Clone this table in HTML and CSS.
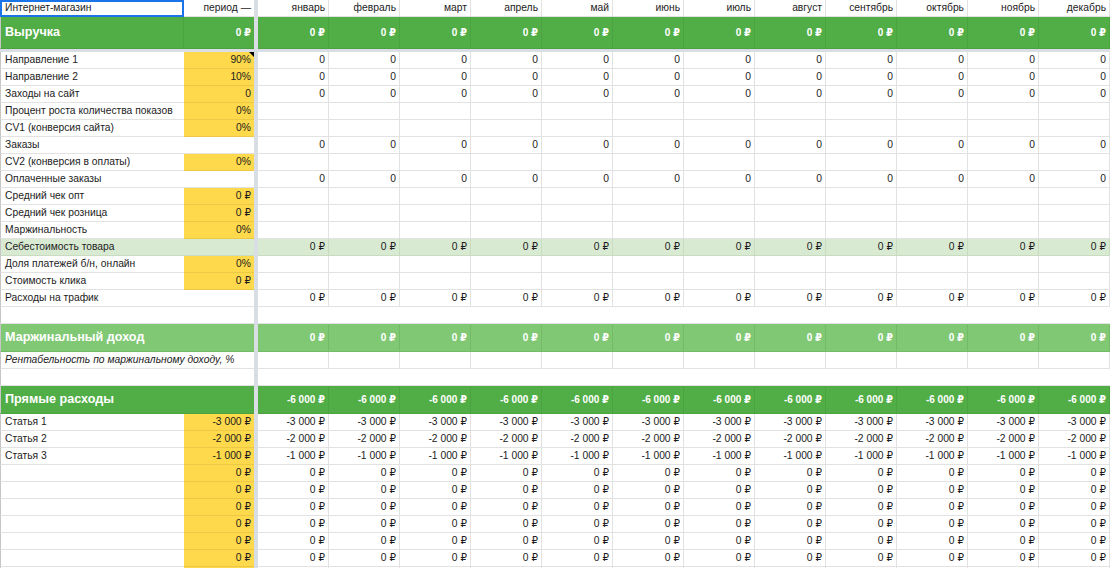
FILE: index.html
```html
<!DOCTYPE html>
<html lang="ru">
<head>
<meta charset="utf-8">
<title>Интернет-магазин</title>
<link rel="stylesheet" href="styles.css">
</head>
<body>
<div class="sheet">
  <div class="row head">
    <div class="a sel">Интернет-магазин</div><div class="b">период —</div><div class="fz"></div>
    <div class="m">январь</div><div class="m">февраль</div><div class="m">март</div><div class="m">апрель</div><div class="m">май</div><div class="m">июнь</div><div class="m">июль</div><div class="m">август</div><div class="m">сентябрь</div><div class="m">октябрь</div><div class="m">ноябрь</div><div class="m">декабрь</div>
  </div>
  <div class="row band tall">
    <div class="a split">Выручка</div><div class="b">0 ₽</div><div class="fz"></div>
    <div class="m">0 ₽</div><div class="m">0 ₽</div><div class="m">0 ₽</div><div class="m">0 ₽</div><div class="m">0 ₽</div><div class="m">0 ₽</div><div class="m">0 ₽</div><div class="m">0 ₽</div><div class="m">0 ₽</div><div class="m">0 ₽</div><div class="m">0 ₽</div><div class="m">0 ₽</div>
  </div>
  <div class="hfz"></div>
  <div class="row">
    <div class="a">Направление 1</div><div class="b y note">90%</div><div class="fz"></div>
    <div class="m">0</div><div class="m">0</div><div class="m">0</div><div class="m">0</div><div class="m">0</div><div class="m">0</div><div class="m">0</div><div class="m">0</div><div class="m">0</div><div class="m">0</div><div class="m">0</div><div class="m">0</div>
  </div>
  <div class="row">
    <div class="a">Направление 2</div><div class="b y">10%</div><div class="fz"></div>
    <div class="m">0</div><div class="m">0</div><div class="m">0</div><div class="m">0</div><div class="m">0</div><div class="m">0</div><div class="m">0</div><div class="m">0</div><div class="m">0</div><div class="m">0</div><div class="m">0</div><div class="m">0</div>
  </div>
  <div class="row">
    <div class="a">Заходы на сайт</div><div class="b y">0</div><div class="fz"></div>
    <div class="m">0</div><div class="m">0</div><div class="m">0</div><div class="m">0</div><div class="m">0</div><div class="m">0</div><div class="m">0</div><div class="m">0</div><div class="m">0</div><div class="m">0</div><div class="m">0</div><div class="m">0</div>
  </div>
  <div class="row">
    <div class="a">Процент роста количества показов</div><div class="b y">0%</div><div class="fz"></div>
    <div class="m"></div><div class="m"></div><div class="m"></div><div class="m"></div><div class="m"></div><div class="m"></div><div class="m"></div><div class="m"></div><div class="m"></div><div class="m"></div><div class="m"></div><div class="m"></div>
  </div>
  <div class="row">
    <div class="a">CV1 (конверсия сайта)</div><div class="b y">0%</div><div class="fz"></div>
    <div class="m"></div><div class="m"></div><div class="m"></div><div class="m"></div><div class="m"></div><div class="m"></div><div class="m"></div><div class="m"></div><div class="m"></div><div class="m"></div><div class="m"></div><div class="m"></div>
  </div>
  <div class="row">
    <div class="a">Заказы</div><div class="b"></div><div class="fz"></div>
    <div class="m">0</div><div class="m">0</div><div class="m">0</div><div class="m">0</div><div class="m">0</div><div class="m">0</div><div class="m">0</div><div class="m">0</div><div class="m">0</div><div class="m">0</div><div class="m">0</div><div class="m">0</div>
  </div>
  <div class="row">
    <div class="a">CV2 (конверсия в оплаты)</div><div class="b y">0%</div><div class="fz"></div>
    <div class="m"></div><div class="m"></div><div class="m"></div><div class="m"></div><div class="m"></div><div class="m"></div><div class="m"></div><div class="m"></div><div class="m"></div><div class="m"></div><div class="m"></div><div class="m"></div>
  </div>
  <div class="row">
    <div class="a">Оплаченные заказы</div><div class="b"></div><div class="fz"></div>
    <div class="m">0</div><div class="m">0</div><div class="m">0</div><div class="m">0</div><div class="m">0</div><div class="m">0</div><div class="m">0</div><div class="m">0</div><div class="m">0</div><div class="m">0</div><div class="m">0</div><div class="m">0</div>
  </div>
  <div class="row">
    <div class="a">Средний чек опт</div><div class="b y">0 ₽</div><div class="fz"></div>
    <div class="m"></div><div class="m"></div><div class="m"></div><div class="m"></div><div class="m"></div><div class="m"></div><div class="m"></div><div class="m"></div><div class="m"></div><div class="m"></div><div class="m"></div><div class="m"></div>
  </div>
  <div class="row">
    <div class="a">Средний чек розница</div><div class="b y">0 ₽</div><div class="fz"></div>
    <div class="m"></div><div class="m"></div><div class="m"></div><div class="m"></div><div class="m"></div><div class="m"></div><div class="m"></div><div class="m"></div><div class="m"></div><div class="m"></div><div class="m"></div><div class="m"></div>
  </div>
  <div class="row">
    <div class="a">Маржинальность</div><div class="b y">0%</div><div class="fz"></div>
    <div class="m"></div><div class="m"></div><div class="m"></div><div class="m"></div><div class="m"></div><div class="m"></div><div class="m"></div><div class="m"></div><div class="m"></div><div class="m"></div><div class="m"></div><div class="m"></div>
  </div>
  <div class="row cost">
    <div class="a">Себестоимость товара</div><div class="b"></div><div class="fz"></div>
    <div class="m">0 ₽</div><div class="m">0 ₽</div><div class="m">0 ₽</div><div class="m">0 ₽</div><div class="m">0 ₽</div><div class="m">0 ₽</div><div class="m">0 ₽</div><div class="m">0 ₽</div><div class="m">0 ₽</div><div class="m">0 ₽</div><div class="m">0 ₽</div><div class="m">0 ₽</div>
  </div>
  <div class="row">
    <div class="a">Доля платежей б/н, онлайн</div><div class="b y">0%</div><div class="fz"></div>
    <div class="m"></div><div class="m"></div><div class="m"></div><div class="m"></div><div class="m"></div><div class="m"></div><div class="m"></div><div class="m"></div><div class="m"></div><div class="m"></div><div class="m"></div><div class="m"></div>
  </div>
  <div class="row">
    <div class="a">Стоимость клика</div><div class="b y">0 ₽</div><div class="fz"></div>
    <div class="m"></div><div class="m"></div><div class="m"></div><div class="m"></div><div class="m"></div><div class="m"></div><div class="m"></div><div class="m"></div><div class="m"></div><div class="m"></div><div class="m"></div><div class="m"></div>
  </div>
  <div class="row">
    <div class="a">Расходы на трафик</div><div class="b"></div><div class="fz"></div>
    <div class="m">0 ₽</div><div class="m">0 ₽</div><div class="m">0 ₽</div><div class="m">0 ₽</div><div class="m">0 ₽</div><div class="m">0 ₽</div><div class="m">0 ₽</div><div class="m">0 ₽</div><div class="m">0 ₽</div><div class="m">0 ₽</div><div class="m">0 ₽</div><div class="m">0 ₽</div>
  </div>
  <div class="row blank">
    <div class="a"></div><div class="b"></div><div class="fz"></div>
    <div class="m"></div><div class="m"></div><div class="m"></div><div class="m"></div><div class="m"></div><div class="m"></div><div class="m"></div><div class="m"></div><div class="m"></div><div class="m"></div><div class="m"></div><div class="m"></div>
  </div>
  <div class="row band light mid">
    <div class="a">Маржинальный доход</div><div class="b"></div><div class="fz"></div>
    <div class="m">0 ₽</div><div class="m">0 ₽</div><div class="m">0 ₽</div><div class="m">0 ₽</div><div class="m">0 ₽</div><div class="m">0 ₽</div><div class="m">0 ₽</div><div class="m">0 ₽</div><div class="m">0 ₽</div><div class="m">0 ₽</div><div class="m">0 ₽</div><div class="m">0 ₽</div>
  </div>
  <div class="row it">
    <div class="a">Рентабельность по маржинальному доходу, %</div><div class="b"></div><div class="fz"></div>
    <div class="m"></div><div class="m"></div><div class="m"></div><div class="m"></div><div class="m"></div><div class="m"></div><div class="m"></div><div class="m"></div><div class="m"></div><div class="m"></div><div class="m"></div><div class="m"></div>
  </div>
  <div class="row blank">
    <div class="a"></div><div class="b"></div><div class="fz"></div>
    <div class="m"></div><div class="m"></div><div class="m"></div><div class="m"></div><div class="m"></div><div class="m"></div><div class="m"></div><div class="m"></div><div class="m"></div><div class="m"></div><div class="m"></div><div class="m"></div>
  </div>
  <div class="row band mid">
    <div class="a">Прямые расходы</div><div class="b"></div><div class="fz"></div>
    <div class="m">-6 000 ₽</div><div class="m">-6 000 ₽</div><div class="m">-6 000 ₽</div><div class="m">-6 000 ₽</div><div class="m">-6 000 ₽</div><div class="m">-6 000 ₽</div><div class="m">-6 000 ₽</div><div class="m">-6 000 ₽</div><div class="m">-6 000 ₽</div><div class="m">-6 000 ₽</div><div class="m">-6 000 ₽</div><div class="m">-6 000 ₽</div>
  </div>
  <div class="row">
    <div class="a">Статья 1</div><div class="b y">-3 000 ₽</div><div class="fz"></div>
    <div class="m">-3 000 ₽</div><div class="m">-3 000 ₽</div><div class="m">-3 000 ₽</div><div class="m">-3 000 ₽</div><div class="m">-3 000 ₽</div><div class="m">-3 000 ₽</div><div class="m">-3 000 ₽</div><div class="m">-3 000 ₽</div><div class="m">-3 000 ₽</div><div class="m">-3 000 ₽</div><div class="m">-3 000 ₽</div><div class="m">-3 000 ₽</div>
  </div>
  <div class="row">
    <div class="a">Статья 2</div><div class="b y">-2 000 ₽</div><div class="fz"></div>
    <div class="m">-2 000 ₽</div><div class="m">-2 000 ₽</div><div class="m">-2 000 ₽</div><div class="m">-2 000 ₽</div><div class="m">-2 000 ₽</div><div class="m">-2 000 ₽</div><div class="m">-2 000 ₽</div><div class="m">-2 000 ₽</div><div class="m">-2 000 ₽</div><div class="m">-2 000 ₽</div><div class="m">-2 000 ₽</div><div class="m">-2 000 ₽</div>
  </div>
  <div class="row">
    <div class="a">Статья 3</div><div class="b y">-1 000 ₽</div><div class="fz"></div>
    <div class="m">-1 000 ₽</div><div class="m">-1 000 ₽</div><div class="m">-1 000 ₽</div><div class="m">-1 000 ₽</div><div class="m">-1 000 ₽</div><div class="m">-1 000 ₽</div><div class="m">-1 000 ₽</div><div class="m">-1 000 ₽</div><div class="m">-1 000 ₽</div><div class="m">-1 000 ₽</div><div class="m">-1 000 ₽</div><div class="m">-1 000 ₽</div>
  </div>
  <div class="row">
    <div class="a"></div><div class="b y">0 ₽</div><div class="fz"></div>
    <div class="m">0 ₽</div><div class="m">0 ₽</div><div class="m">0 ₽</div><div class="m">0 ₽</div><div class="m">0 ₽</div><div class="m">0 ₽</div><div class="m">0 ₽</div><div class="m">0 ₽</div><div class="m">0 ₽</div><div class="m">0 ₽</div><div class="m">0 ₽</div><div class="m">0 ₽</div>
  </div>
  <div class="row">
    <div class="a"></div><div class="b y">0 ₽</div><div class="fz"></div>
    <div class="m">0 ₽</div><div class="m">0 ₽</div><div class="m">0 ₽</div><div class="m">0 ₽</div><div class="m">0 ₽</div><div class="m">0 ₽</div><div class="m">0 ₽</div><div class="m">0 ₽</div><div class="m">0 ₽</div><div class="m">0 ₽</div><div class="m">0 ₽</div><div class="m">0 ₽</div>
  </div>
  <div class="row">
    <div class="a"></div><div class="b y">0 ₽</div><div class="fz"></div>
    <div class="m">0 ₽</div><div class="m">0 ₽</div><div class="m">0 ₽</div><div class="m">0 ₽</div><div class="m">0 ₽</div><div class="m">0 ₽</div><div class="m">0 ₽</div><div class="m">0 ₽</div><div class="m">0 ₽</div><div class="m">0 ₽</div><div class="m">0 ₽</div><div class="m">0 ₽</div>
  </div>
  <div class="row">
    <div class="a"></div><div class="b y">0 ₽</div><div class="fz"></div>
    <div class="m">0 ₽</div><div class="m">0 ₽</div><div class="m">0 ₽</div><div class="m">0 ₽</div><div class="m">0 ₽</div><div class="m">0 ₽</div><div class="m">0 ₽</div><div class="m">0 ₽</div><div class="m">0 ₽</div><div class="m">0 ₽</div><div class="m">0 ₽</div><div class="m">0 ₽</div>
  </div>
  <div class="row">
    <div class="a"></div><div class="b y">0 ₽</div><div class="fz"></div>
    <div class="m">0 ₽</div><div class="m">0 ₽</div><div class="m">0 ₽</div><div class="m">0 ₽</div><div class="m">0 ₽</div><div class="m">0 ₽</div><div class="m">0 ₽</div><div class="m">0 ₽</div><div class="m">0 ₽</div><div class="m">0 ₽</div><div class="m">0 ₽</div><div class="m">0 ₽</div>
  </div>
  <div class="row">
    <div class="a"></div><div class="b y">0 ₽</div><div class="fz"></div>
    <div class="m">0 ₽</div><div class="m">0 ₽</div><div class="m">0 ₽</div><div class="m">0 ₽</div><div class="m">0 ₽</div><div class="m">0 ₽</div><div class="m">0 ₽</div><div class="m">0 ₽</div><div class="m">0 ₽</div><div class="m">0 ₽</div><div class="m">0 ₽</div><div class="m">0 ₽</div>
  </div>
  <div class="row">
    <div class="a"></div><div class="b y"></div><div class="fz"></div>
    <div class="m"></div><div class="m"></div><div class="m"></div><div class="m"></div><div class="m"></div><div class="m"></div><div class="m"></div><div class="m"></div><div class="m"></div><div class="m"></div><div class="m"></div><div class="m"></div>
  </div>
</div>
</body>
</html>
```

FILE: styles.css
```css
* { box-sizing: border-box; }
html, body { margin: 0; padding: 0; background: #fff; }
body {
  width: 1113px;
  height: 568px;
  overflow: hidden;
  font-family: "Liberation Sans", Arial, "DejaVu Sans", sans-serif;
  font-size: 10.3px;
  color: #1c1c1c;
}
.sheet { width: 1110px; }
.row {
  display: grid;
  grid-template-columns: 184px 70px 4px repeat(12, 71px);
  height: 17px;
}
.row > div {
  border-bottom: 1px solid #e2e2e2;
  line-height: 16px;
  white-space: nowrap;
}
.row > .a { border-left: 1px solid #c6c6c6; padding-left: 4px; }
.row > .b { text-align: right; padding-right: 3px; }
.row > .fz { background: #d9dee5; border-bottom: 0; }
.row > .m { text-align: right; padding-right: 3px; border-right: 1px solid #e2e2e2; }
.row > .y {
  background: #fdd94b;
  border-bottom-color: #ecc845;
}
.note { position: relative; }
.note::after {
  content: "";
  position: absolute;
  top: 0;
  right: 0;
  border-top: 5px solid #000;
  border-left: 5px solid transparent;
}
.sel { outline: 2px solid #1a73e8; outline-offset: -2px; }
.hfz { height: 4px; background: #d9dee5; width: 1110px; }

.band { background: #51ad46; color: #fff; font-weight: bold; }
.band.light { background: #80c874; }
.band.tall { height: 31px; }
.band.mid { height: 28px; }
.band > div { border-bottom-color: #4aa240; }
.band.tall > div { line-height: 31px; }
.band.mid > div { line-height: 27px; }
.band > .a { font-size: 12.6px; padding-left: 4px; }
.band > .a.split { border-right: 1px solid #4aa240; }
.band > .b, .band > .m { font-size: 10px; }
.band > .m { border-right-color: #4aa240; }
.band.light > div { border-bottom-color: #74bb68; }
.band.light > .m { border-right-color: #74bb68; }

.cost > .a, .cost > .b, .cost > .m { background: #d9ead3; border-bottom-color: #c9dcc2; }
.cost > .m { border-right-color: #c9dcc2; }

.blank > .m { border-right-color: transparent; }
.it > .a { font-style: italic; }
```
